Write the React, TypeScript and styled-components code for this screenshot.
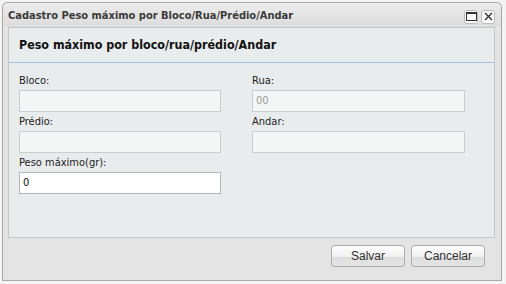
import styled, { createGlobalStyle } from "styled-components"

const GlobalStyle = createGlobalStyle`
  html, body {
    margin: 0;
    padding: 0;
    background: #f4f4f4;
  }
  body {
    font-family: "DejaVu Sans Condensed", "DejaVu Sans", sans-serif;
  }
`

type FieldProps = {
  label: string
  value?: string
  enabled?: boolean
}

function Field({ label, value = "", enabled = false }: FieldProps) {
  return (
    <FieldBox>
      <Label>{label}</Label>
      <Input $enabled={enabled}>{value}</Input>
    </FieldBox>
  )
}

export default function App() {
  return (
    <>
      <GlobalStyle />
      <Window>
        <TitleBar>
          <Title>Cadastro Peso máximo por Bloco/Rua/Prédio/Andar</Title>
          <Tools>
            <Tool>
              <svg width="11" height="9" viewBox="0 0 11 9">
                <rect x="0.5" y="0.5" width="10" height="8" fill="none" stroke="#333" />
                <rect x="0.5" y="0.5" width="10" height="1.5" fill="#333" />
              </svg>
            </Tool>
            <Tool>
              <svg width="9" height="9" viewBox="0 0 9 9">
                <path d="M1 1 L8 8 M8 1 L1 8" stroke="#333" strokeWidth="1.4" />
              </svg>
            </Tool>
          </Tools>
        </TitleBar>
        <Panel>
          <Heading>Peso máximo por bloco/rua/prédio/Andar</Heading>
          <Form>
            <Field label="Bloco:" />
            <Field label="Rua:" value="00" />
            <Field label="Prédio:" />
            <Field label="Andar:" />
            <Field label="Peso máximo(gr):" value="0" enabled />
          </Form>
        </Panel>
        <Footer>
          <Button>Salvar</Button>
          <Button>Cancelar</Button>
        </Footer>
      </Window>
    </>
  )
}

const Window = styled.div`
  margin: 2px 0 0 2px;
  width: 500px;
  height: 279px;
  box-sizing: border-box;
  border: 1px solid #a9a9a9;
  border-radius: 5px 5px 0 0;
  background: #e4e4e4;
  display: flex;
  flex-direction: column;
  padding: 0 6px 0 5px;
`
const TitleBar = styled.div`
  height: 24px;
  display: flex;
  align-items: center;
  justify-content: space-between;
  margin: 0 -6px 0 -5px;
  padding: 0 6px 0 5px;
  border-radius: 5px 5px 0 0;
  background: linear-gradient(#ececec, #dcdcdc);
`
const Title = styled.div`
  font-size: 11px;
  font-weight: bold;
  color: #3a3a3a;
`
const Tools = styled.div`
  display: flex;
  gap: 3px;
  margin-top: 3px;
`
const Tool = styled.div`
  width: 14px;
  height: 14px;
  box-sizing: border-box;
  border: 1px solid #bbb;
  border-radius: 3px;
  background: #fafafa;
  display: flex;
  align-items: center;
  justify-content: center;
`
const Panel = styled.div`
  height: 211px;
  box-sizing: border-box;
  border: 1px solid #c6c6c6;
  background: #e9eced;
`
const Heading = styled.div`
  height: 35px;
  box-sizing: border-box;
  border-bottom: 1px solid #a3c0e2;
  padding: 0 0 1px 10px;
  display: flex;
  align-items: center;
  font-size: 12.4px;
  font-weight: bold;
  color: #111;
`
const Form = styled.div`
  display: grid;
  grid-template-columns: 202px 213px;
  column-gap: 31px;
  padding: 8px 0 0 10px;
`
const FieldBox = styled.div`
  display: flex;
  flex-direction: column;
`
const Label = styled.div`
  font-size: 11px;
  color: #222;
  height: 19px;
  line-height: 19px;
`
const Input = styled.div<{ $enabled: boolean }>`
  height: 22px;
  box-sizing: border-box;
  border: 1px solid ${(p) => (p.$enabled ? "#b5b5b5" : "#c9cdcf")};
  background: ${(p) => (p.$enabled ? "#fff" : "#f4f6f6")};
  color: ${(p) => (p.$enabled ? "#111" : "#999")};
  font-size: 11px;
  line-height: 20px;
  padding: 0 3px;
`
const Footer = styled.div`
  flex: 1;
  display: flex;
  justify-content: flex-end;
  align-items: flex-start;
  gap: 6px;
  padding: 7px 10px 0 0;
`
const Button = styled.button`
  width: 74px;
  height: 22px;
  border: 1px solid #aaa;
  border-radius: 3px;
  background: linear-gradient(#fdfdfd 0%, #f0f0f0 55%, #dedede 56%, #e4e4e4 100%);
  font-family: "Liberation Sans", Arial, sans-serif;
  font-size: 12px;
  color: #333;
  padding: 0;
`
